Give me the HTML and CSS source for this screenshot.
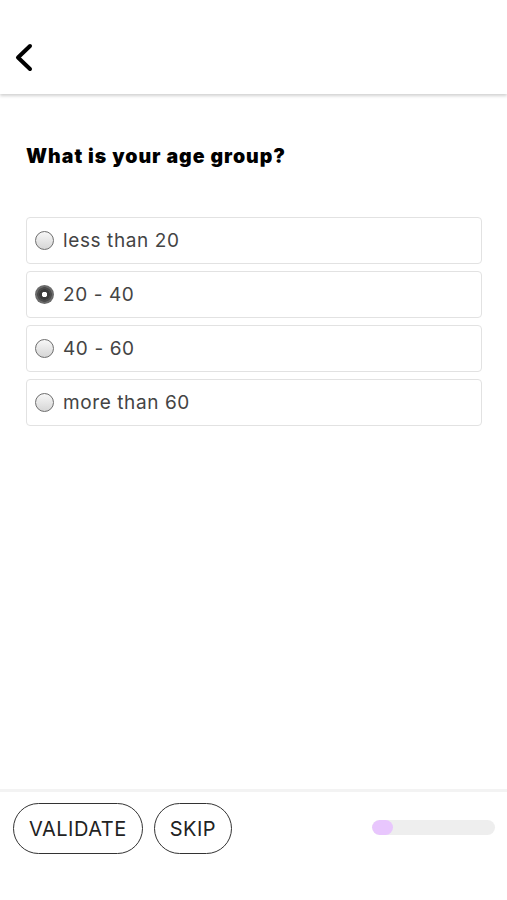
FILE: index.html
```
<!DOCTYPE html>
<html>
<head>
<meta charset="utf-8">
<link rel="stylesheet" href="styles.css">
</head>
<body>
<div class="page">
  <header class="topbar">
    <svg class="back" width="24" height="32" viewBox="0 0 24 32"><path d="M18 4 L6 15.5 L18 27" fill="none" stroke="#000" stroke-width="4" stroke-linecap="round" stroke-linejoin="round"/></svg>
  </header>
  <main class="content">
    <h1 class="question">What is your age group?</h1>
    <div class="options">
      <label class="option"><span class="radio"></span><span class="label">less than 20</span></label>
      <label class="option"><span class="radio checked"></span><span class="label">20 - 40</span></label>
      <label class="option"><span class="radio"></span><span class="label">40 - 60</span></label>
      <label class="option"><span class="radio"></span><span class="label">more than 60</span></label>
    </div>
  </main>
  <footer class="footer">
    <div class="buttons">
      <button class="pill">VALIDATE</button>
      <button class="pill">SKIP</button>
    </div>
    <div class="progress"><div class="fill" style="width:21px"></div></div>
  </footer>
</div>
</body>
</html>
```
FILE: styles.css
```
html, body { margin: 0; padding: 0; background: #fff; }
body { font-family: Inter, "Open Sans", sans-serif; color: #222; }
.page { display: flex; flex-direction: column; height: 900px; }
.topbar {
  height: 94px; background: #fff; box-shadow: 0 2px 3px rgba(0,0,0,0.18);
  display: flex; align-items: flex-end; padding: 0 0 20px 12px; box-sizing: border-box;
  position: relative; z-index: 1;
}
.back { display: block; }
.content { padding: 0 25px 0 26px; flex: 1; }
.question {
  margin: 50px 0 0; font-size: 19.5px; font-weight: 900; color: #000; letter-spacing: 1px; line-height: 24px;
}
.options { margin-top: 49px; display: flex; flex-direction: column; gap: 7px; }
.option {
  height: 47px; box-sizing: border-box; border: 1px solid #e2e2e2; border-radius: 4px;
  display: flex; align-items: center; padding-left: 8px; gap: 9px;
}
.radio {
  width: 19px; height: 19px; box-sizing: border-box; border-radius: 50%;
  border: 1.5px solid #6e6e6e; background: linear-gradient(#f7f7f7, #d6d6d6);
}
.radio.checked {
  border: none;
  background: radial-gradient(circle, #fff 0 2.5px, #3a3a3a 3px 5px, #4a4a4a 5.5px 7px, #6a6a6a 7.5px 9.5px);
}
.label { font-size: 19px; color: #444; font-weight: 400; letter-spacing: 0.6px; }
.footer {
  height: 111px; box-sizing: border-box; border-top: 3px solid #f3f3f3;
  display: flex; align-items: flex-start; justify-content: space-between; padding: 11px 12px 0 13px;
}
.buttons { display: flex; gap: 11px; }
.pill {
  height: 51px; border: 1.5px solid #333; border-radius: 26px; background: #fff;
  font-family: inherit; font-size: 20px; color: #222; padding: 0 15px; font-weight: 400; letter-spacing: 0.5px;
}
.progress { width: 123px; height: 15px; background: #eee; border-radius: 8px; margin-top: 17px; overflow: hidden; }
.fill { height: 100%; background: #e8c6fd; border-radius: 8px; }
```
